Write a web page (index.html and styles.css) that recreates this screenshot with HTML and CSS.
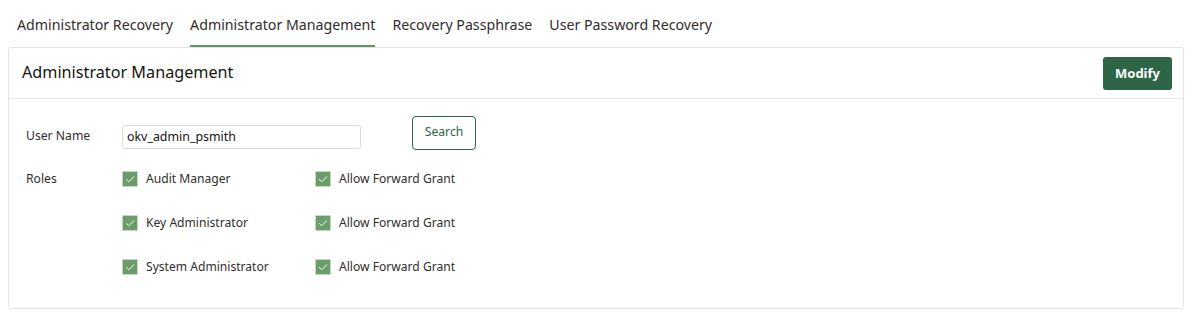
FILE: index.html
```html
<!DOCTYPE html>
<html>
<head>
<meta charset="utf-8">
<link rel="stylesheet" href="styles.css">
</head>
<body>
<div class="page">
  <nav class="tabs">
    <div class="tab">Administrator Recovery</div>
    <div class="tab active">Administrator Management</div>
    <div class="tab">Recovery Passphrase</div>
    <div class="tab">User Password Recovery</div>
  </nav>
  <section class="panel">
    <header class="panel-head">
      <h1 class="panel-title">Administrator Management</h1>
      <button class="btn-primary">Modify</button>
    </header>
    <div class="panel-body">
      <div class="row row-user">
        <div class="label">User Name</div>
        <div class="input">okv_admin_psmith</div>
        <button class="btn-outline">Search</button>
      </div>
      <div class="row row-roles">
        <div class="label">Roles</div>
        <div class="roles">
          <div class="check"><span class="box"><svg viewBox="0 0 16 16"><path d="M3.5 8.3 L6.6 11.2 L12.6 5" fill="none" stroke="#fff" stroke-width="1.1"/></svg></span>Audit Manager</div>
          <div class="check"><span class="box"><svg viewBox="0 0 16 16"><path d="M3.5 8.3 L6.6 11.2 L12.6 5" fill="none" stroke="#fff" stroke-width="1.1"/></svg></span>Allow Forward Grant</div>
          <div class="check"><span class="box"><svg viewBox="0 0 16 16"><path d="M3.5 8.3 L6.6 11.2 L12.6 5" fill="none" stroke="#fff" stroke-width="1.1"/></svg></span>Key Administrator</div>
          <div class="check"><span class="box"><svg viewBox="0 0 16 16"><path d="M3.5 8.3 L6.6 11.2 L12.6 5" fill="none" stroke="#fff" stroke-width="1.1"/></svg></span>Allow Forward Grant</div>
          <div class="check"><span class="box"><svg viewBox="0 0 16 16"><path d="M3.5 8.3 L6.6 11.2 L12.6 5" fill="none" stroke="#fff" stroke-width="1.1"/></svg></span>System Administrator</div>
          <div class="check"><span class="box"><svg viewBox="0 0 16 16"><path d="M3.5 8.3 L6.6 11.2 L12.6 5" fill="none" stroke="#fff" stroke-width="1.1"/></svg></span>Allow Forward Grant</div>
        </div>
      </div>
    </div>
  </section>
</div>
</body>
</html>
```
FILE: styles.css
```css
* { box-sizing: border-box; }
html, body { margin: 0; padding: 0; background: #fff; }
body {
  font-family: "Noto Sans", "Open Sans", sans-serif;
  color: #312d2a;
}
.page { padding: 0 6px 0 8px; }
.tabs {
  display: flex;
  height: 47px;
  padding-left: 0.5px;
}
.tab {
  font-size: 14.2px;
  line-height: 49px;
  padding: 0 8.5px;
  height: 47px;
  color: #312d2a;
  white-space: nowrap;
}
.tab.active {
  height: 47px;
  line-height: 49px;
  margin: 0 8.5px;
  padding: 0;
  border-bottom: 2px solid #5e9b62;
}
.panel {
  border: 1px solid #e3e3e3;
  border-radius: 3px;
  height: 262px;
}
.panel-head {
  display: flex;
  align-items: center;
  justify-content: space-between;
  height: 51px;
  padding: 0 11px 0 13px;
  border-bottom: 1px solid #e6e6e6;
}
.panel-title {
  margin: 0 0 2px;
  font-size: 16.2px;
  font-weight: 400;
  color: #161513;
}
.btn-primary {
  width: 69px;
  height: 33px;
  background: #2e6546;
  color: #fff;
  border: none;
  border-radius: 3px;
  font-family: inherit;
  font-size: 13px;
  font-weight: 700;
  padding: 0 0 2px;
  margin-top: 1px;
}
.panel-body { padding: 17px 0 0 17px; }
.row { display: flex; }
.label {
  width: 96px;
  font-size: 12.2px;
  color: #312d2a;
}
.row-user { align-items: flex-start; height: 49px; }
.row-user .label { margin-top: 11px; }
.input {
  margin-top: 9px;
  width: 239px;
  height: 24px;
  border: 1px solid #dedbd6;
  border-radius: 3px;
  font-size: 12.4px;
  line-height: 22px;
  padding-left: 4px;
  color: #161513;
}
.btn-outline {
  margin-left: 51px;
  width: 64px;
  height: 34px;
  background: #fff;
  border: 1px solid #2e6546;
  border-radius: 4px;
  color: #2e6546;
  font-family: inherit;
  font-size: 12.2px;
  padding: 0 0 3px;
}
.row-roles { margin-top: 6px; }
.row-roles .label { line-height: 16px; }
.roles {
  display: grid;
  grid-template-columns: 193px auto;
  row-gap: 28px;
}
.check {
  display: flex;
  align-items: center;
  font-size: 12.1px;
  line-height: 16px;
  height: 16px;
  color: #312d2a;
  white-space: nowrap;
}
.box {
  width: 16px;
  height: 16px;
  margin-right: 8px;
  background: #6b9d6b;
  border: 1px solid #c7d7c3;
  border-radius: 1px;
  display: flex;
}
.box svg { width: 14px; height: 14px; }
```
